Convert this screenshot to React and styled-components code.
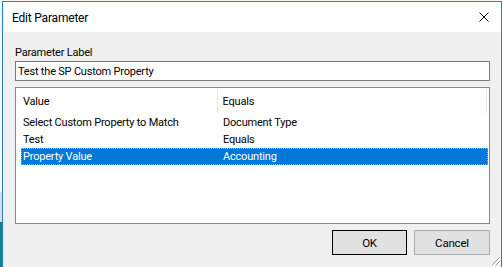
import React from 'react';
import styled, { createGlobalStyle } from 'styled-components';

const GlobalStyle = createGlobalStyle`
  html, body {
    margin: 0;
    padding: 0;
    overflow: hidden;
  }
  body {
    font-family: Roboto, "Liberation Sans", Arial, sans-serif;
    font-size: 11px;
    letter-spacing: -0.2px;
    color: #000;
  }
`;

const rows = [
  { value: 'Select Custom Property to Match', equals: 'Document Type' },
  { value: 'Test', equals: 'Equals' },
  { value: 'Property Value', equals: 'Accounting', selected: true },
];

const App = () => {
  return (
    <>
      <GlobalStyle />
      <Desktop>
        <Window>
          <TitleBar>
            <Title>Edit Parameter</Title>
            <CloseButton aria-label="Close">
              <svg width="10" height="10" viewBox="0 0 10 10">
                <path d="M0.5 0.5 L9.5 9.5 M9.5 0.5 L0.5 9.5" stroke="#000" strokeWidth="1" fill="none" />
              </svg>
            </CloseButton>
          </TitleBar>

          <Client>
            <Label>Parameter Label</Label>
            <TextBox type="text" defaultValue="Test the SP Custom Property" />

            <ListView>
              <Header>
                <HeaderCell $width={197} $divider>Value</HeaderCell>
                <HeaderCell $width={269}>Equals</HeaderCell>
              </Header>
              <Rows>
                {rows.map((row) => (
                  <Row key={row.value} $selected={row.selected}>
                    <Cell $width={200}>{row.value}</Cell>
                    <Cell>{row.equals}</Cell>
                  </Row>
                ))}
              </Rows>
            </ListView>

            <Buttons>
              <Button $default>OK</Button>
              <Button>Cancel</Button>
            </Buttons>
          </Client>

          <Grip>
            <svg width="12" height="12" viewBox="0 0 12 12">
              <path d="M11 3 L3 11 M11 7 L7 11" stroke="#a0a0a0" strokeWidth="1" fill="none" />
              <path d="M12 4 L4 12 M12 8 L8 12" stroke="#fff" strokeWidth="1" fill="none" />
            </svg>
          </Grip>
        </Window>
      </Desktop>
    </>
  );
};

const Desktop = styled.div`
  width: 502px;
  height: 267px;
  padding: 1px 0 0 2px;
  box-sizing: border-box;
  overflow: hidden;
  background: linear-gradient(to bottom, #f7f7f7 0, #f7f7f7 192px, #dcdcdc 192px, #dcdcdc 222px, #13808a 222px);
`;

const Window = styled.div`
  position: relative;
  width: 500px;
  height: 300px;
  box-sizing: border-box;
  border: 1px solid #1883d7;
  background: #f0f0f0;
  display: flex;
  flex-direction: column;
`;

const TitleBar = styled.div`
  height: 30px;
  background: #fff;
  display: flex;
  align-items: center;
  justify-content: space-between;
  padding: 0 10px 0 9px;
`;

const Title = styled.span`
  font-size: 12px;
  padding-top: 1px;
`;

const CloseButton = styled.div`
  display: flex;
  align-items: center;
  justify-content: center;
  width: 14px;
  height: 14px;
`;

const Client = styled.div`
  display: flex;
  flex-direction: column;
  padding: 12px 10px 0 12px;
`;

const Label = styled.label`
  height: 17px;
  line-height: 17px;
`;

const TextBox = styled.input`
  box-sizing: border-box;
  width: 475px;
  height: 20px;
  margin: 0;
  padding: 0 2px;
  border: 1px solid #7a7a7a;
  font-family: inherit;
  font-size: 11px;
  letter-spacing: -0.2px;
  color: #000;
  background: #fff;
  outline: none;
`;

const ListView = styled.div`
  box-sizing: border-box;
  width: 475px;
  height: 137px;
  margin-top: 6px;
  border: 1px solid #828790;
  background: #fff;
  padding: 1px 1px 0 5px;
`;

const Header = styled.div`
  display: flex;
  height: 24px;
  border-right: 1px solid #e5e5e5;
  width: 466px;
  box-sizing: border-box;
`;

const HeaderCell = styled.div`
  box-sizing: border-box;
  width: ${(p) => p.$width}px;
  padding-left: ${(p) => (p.$divider ? 2 : 5)}px;
  display: flex;
  align-items: center;
  border-right: ${(p) => (p.$divider ? '1px solid #e5e5e5' : 'none')};
`;

const Rows = styled.div`
  display: flex;
  flex-direction: column;
  margin-top: 1px;
`;

const Row = styled.div`
  display: flex;
  box-sizing: border-box;
  width: 467px;
  height: 17px;
  align-items: center;
  background: ${(p) => (p.$selected ? '#0078d7' : 'transparent')};
  color: ${(p) => (p.$selected ? '#fff' : '#000')};
  border: 1px dotted ${(p) => (p.$selected ? '#f0a050' : 'transparent')};
`;

const Cell = styled.div`
  box-sizing: border-box;
  width: ${(p) => (p.$width ? `${p.$width}px` : 'auto')};
  padding-left: 1px;
  white-space: nowrap;
`;

const Buttons = styled.div`
  display: flex;
  justify-content: flex-end;
  gap: 7px;
  width: 475px;
  margin-top: 6px;
`;

const Button = styled.button`
  box-sizing: border-box;
  width: ${(p) => (p.$default ? '75px' : '76px')};
  height: 25px;
  margin: 0;
  padding: 0;
  font-family: inherit;
  font-size: 11.5px;
  letter-spacing: -0.2px;
  color: #000;
  background: #e1e1e1;
  border: 1px solid ${(p) => (p.$default ? '#000' : '#adadad')};
`;

const Grip = styled.div`
  position: absolute;
  left: 486px;
  top: 252px;
  width: 12px;
  height: 12px;
`;

export default App;
